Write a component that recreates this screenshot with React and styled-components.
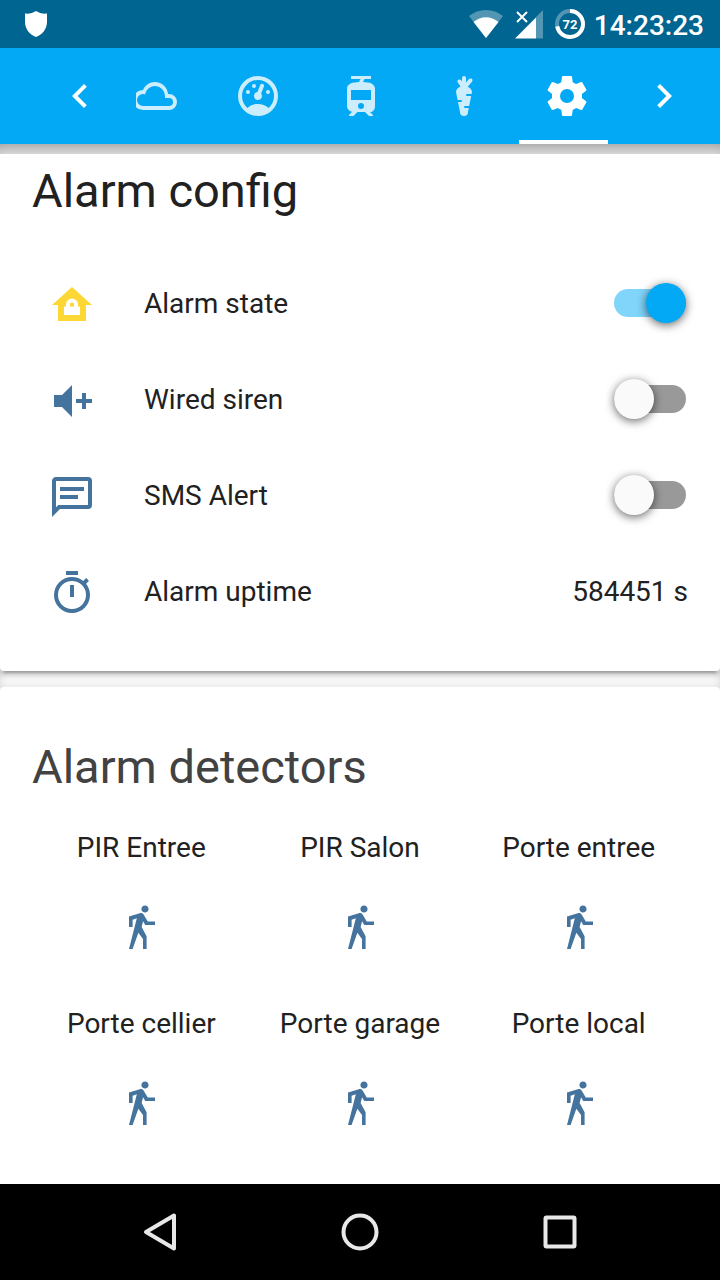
import React from "react";
import styled, { createGlobalStyle } from "styled-components";

const GlobalStyle = createGlobalStyle`
  *, *::before, *::after { box-sizing: border-box; }
  body {
    margin: 0;
    background: #f7f7f7;
    color: #212121;
    font-family: Roboto, "Noto Sans", sans-serif;
    font-size: 28px;
    line-height: 40px;
  }
  button { border: 0; padding: 0; background: none; color: inherit; font: inherit; }
`;

const icons = {
  chevronLeft: "M15.41,16.58L10.83,12L15.41,7.41L14,6L8,12L14,18L15.41,16.58Z",
  chevronRight: "M8.59,16.58L13.17,12L8.59,7.41L10,6L16,12L10,18L8.59,16.58Z",
  cloud:
    "M6,19A5,5 0 0,1 1,14A5,5 0 0,1 6,9C7,6.65 9.3,5 12,5C15.43,5 18.24,7.66 18.5,11.03L19,11A4,4 0 0,1 23,15A4,4 0 0,1 19,19H6M19,13H17V12A5,5 0 0,0 12,7C9.5,7 7.45,8.82 7.06,11.19C6.73,11.07 6.37,11 6,11A3,3 0 0,0 3,14A3,3 0 0,0 6,17H19A2,2 0 0,0 21,15A2,2 0 0,0 19,13Z",
  gauge:
    "M12,2A10,10 0 0,0 2,12A10,10 0 0,0 12,22A10,10 0 0,0 22,12A10,10 0 0,0 12,2M12,4A8,8 0 0,1 20,12C20,14.4 19,16.5 17.3,18C15.9,16.7 14,16 12,16C10,16 8.2,16.7 6.7,18C5,16.5 4,14.4 4,12A8,8 0 0,1 12,4M14,5.89C13.62,5.9 13.26,6.15 13.1,6.54L11.81,9.77L11.71,10C11,10.13 10.41,10.6 10.14,11.26C9.73,12.29 10.23,13.45 11.26,13.86C12.29,14.27 13.45,13.77 13.86,12.74C14.12,12.08 14,11.32 13.57,10.76L13.67,10.5L14.96,7.29L14.97,7.26C15.17,6.75 14.92,6.17 14.41,5.96C14.28,5.91 14.15,5.89 14,5.89M10,6A1,1 0 0,0 9,7A1,1 0 0,0 10,8A1,1 0 0,0 11,7A1,1 0 0,0 10,6M7,9A1,1 0 0,0 6,10A1,1 0 0,0 7,11A1,1 0 0,0 8,10A1,1 0 0,0 7,9M17,9A1,1 0 0,0 16,10A1,1 0 0,0 17,11A1,1 0 0,0 18,10A1,1 0 0,0 17,9Z",
  tram:
    "M19,16.94V8.5C19,5.79 16.39,5.1 13,5L13.75,3.5H17V2H7V3.5H11.75L11,5C7.86,5.11 5,5.73 5,8.5V16.94C5,18.39 6.19,19.6 7.59,19.91L6,21.5V22H8.23L10.23,20H14L16,22H18V21.5L16.5,20H16.42C18.11,20 19,18.63 19,16.94M12,18.5A1.5,1.5 0 0,1 10.5,17A1.5,1.5 0 0,1 12,15.5A1.5,1.5 0 0,1 13.5,17A1.5,1.5 0 0,1 12,18.5M17,14H7V9H17V14Z",
  carrot:
    "M16,10L15.8,11H13.5A0.5,0.5 0 0,0 13,11.5A0.5,0.5 0 0,0 13.5,12H15.6L14.6,17H12.5A0.5,0.5 0 0,0 12,17.5A0.5,0.5 0 0,0 12.5,18H14.4L14,20A2,2 0 0,1 12,22A2,2 0 0,1 10,20L9,15H10.5A0.5,0.5 0 0,0 11,14.5A0.5,0.5 0 0,0 10.5,14H8.8L8,10C8,8.8 8.93,7.77 10.29,7.29L8.9,5.28C8.59,4.82 8.7,4.2 9.16,3.89C9.61,3.57 10.23,3.69 10.55,4.14L11,4.8V3A1,1 0 0,1 12,2A1,1 0 0,1 13,3V5.28L14.5,3.54C14.83,3.12 15.47,3.07 15.89,3.43C16.31,3.78 16.36,4.41 16,4.84L13.87,7.35C15.14,7.85 16,8.85 16,10Z",
  settings:
    "M12,15.5A3.5,3.5 0 0,1 8.5,12A3.5,3.5 0 0,1 12,8.5A3.5,3.5 0 0,1 15.5,12A3.5,3.5 0 0,1 12,15.5M19.43,12.97C19.47,12.65 19.5,12.33 19.5,12C19.5,11.67 19.47,11.34 19.43,11L21.54,9.37C21.73,9.22 21.78,8.95 21.66,8.73L19.66,5.27C19.54,5.05 19.27,4.96 19.05,5.05L16.56,6.05C16.04,5.66 15.5,5.32 14.87,5.07L14.5,2.42C14.46,2.18 14.25,2 14,2H10C9.75,2 9.54,2.18 9.5,2.42L9.13,5.07C8.5,5.32 7.96,5.66 7.44,6.05L4.95,5.05C4.73,4.96 4.46,5.05 4.34,5.27L2.34,8.73C2.21,8.95 2.27,9.22 2.46,9.37L4.57,11C4.53,11.34 4.5,11.67 4.5,12C4.5,12.33 4.53,12.65 4.57,12.97L2.46,14.63C2.27,14.78 2.21,15.05 2.34,15.27L4.34,18.73C4.46,18.95 4.73,19.03 4.95,18.95L7.44,17.94C7.96,18.34 8.5,18.68 9.13,18.93L9.5,21.58C9.54,21.82 9.75,22 10,22H14C14.25,22 14.46,21.82 14.5,21.58L14.87,18.93C15.5,18.67 16.04,18.34 16.56,17.94L19.05,18.95C19.27,19.03 19.54,18.95 19.66,18.73L21.66,15.27C21.78,15.05 21.73,14.78 21.54,14.63L19.43,12.97Z",
  homeLock:
    "M12,3L2,12H5V20H19V12H22L12,3M12,8.8A3,3 0 0,1 15,11.8V12.8H16V17H8V12.8H9V11.8A3,3 0 0,1 12,8.8M12,10.8A1.1,1.1 0 0,0 10.9,11.9V12.8H13.1V11.9A1.1,1.1 0 0,0 12,10.8Z",
  volumePlus: "M3,9H7L12,4V20L7,15H3V9M14,11H17V8H19V11H22V13H19V16H17V13H14V11Z",
  message:
    "M20,2A2,2 0 0,1 22,4V16A2,2 0 0,1 20,18H6L2,22V4C2,2.89 2.9,2 4,2H20M4,4V17.17L5.17,16H20V4H4M6,7H18V9H6V7M6,11H15V13H6V11Z",
  timer:
    "M12,20A7,7 0 0,1 5,13A7,7 0 0,1 12,6A7,7 0 0,1 19,13A7,7 0 0,1 12,20M19.03,7.39L20.45,5.97C20,5.46 19.55,5 19.04,4.56L17.62,6C16.07,4.74 14.12,4 12,4A9,9 0 0,0 3,13A9,9 0 0,0 12,22C17,22 21,17.97 21,13C21,10.88 20.26,8.93 19.03,7.39M11,14H13V8H11V14M15,1H9V3H15V1Z",
  walk:
    "M14.12,10H19V8.2H15.38L13.38,4.87C13.08,4.37 12.54,4.03 11.92,4.03C11.74,4.03 11.58,4.06 11.42,4.11L6,5.8V11H7.8V7.33L9.91,6.67L6,22H7.8L10.67,13.89L13,17V22H14.8V15.59L12.31,11.05L13.04,8.18M14,3.8C15,3.8 15.8,3 15.8,2C15.8,1 15,0.2 14,0.2C13,0.2 12.2,1 12.2,2C12.2,3 13,3.8 14,3.8Z",
};

const Glyph = styled.svg`
  display: block;
  flex: none;
  width: 48px;
  height: 48px;
  overflow: visible;
  fill: ${(p) => p.$color || "currentColor"};
`;

function Icon({ name, color }) {
  return (
    <Glyph viewBox="0 0 24 24" $color={color} aria-hidden="true">
      <path fillRule="evenodd" d={icons[name]} />
    </Glyph>
  );
}

const Screen = styled.div`
  min-height: 100vh;
  display: flex;
  flex-direction: column;
`;

const StatusBar = styled.div`
  display: flex;
  align-items: center;
  justify-content: space-between;
  height: 48px;
  padding: 0 16px 0 20px;
  background: #006590;
  color: #fff;
`;

const StatusGroup = styled.div`
  display: flex;
  align-items: center;
  gap: ${(p) => p.$gap}px;
`;

const StatusIcon = styled.svg`
  display: block;
  width: ${(p) => p.$width}px;
  height: 32px;
`;

const BatteryText = styled.text`
  font: 700 13px Roboto, sans-serif;
  fill: #fff;
`;

const Clock = styled.time`
  padding-top: 4px;
  font-size: 28px;
  font-weight: 500;
`;

const Toolbar = styled.header`
  display: flex;
  height: 96px;
  padding-left: 24px;
  background: #03a9f4;
  color: #fff;
`;

const ScrollButton = styled.button`
  flex: none;
  display: grid;
  place-items: center;
  width: 112px;
`;

const TabScroller = styled.nav`
  flex: 1;
  min-width: 0;
  overflow: hidden;
`;

const TabList = styled.div`
  display: flex;
  justify-content: flex-end;
  gap: 7px;
  height: 100%;
  margin-right: -7px;
`;

const Tab = styled.button`
  flex: none;
  display: grid;
  place-items: center;
  width: 96px;
  box-shadow: ${(p) => (p.$active ? "inset 0 -4px #fff" : "none")};
  > svg { opacity: ${(p) => (p.$active ? 1 : 0.8)}; }
`;

const Content = styled.main`
  flex: 1;
  display: flex;
  flex-direction: column;
  gap: 16px;
  padding-top: 10px;
  box-shadow: inset 0 12px 14px -6px rgba(0, 0, 0, 0.36);
`;

const Card = styled.section`
  padding: ${(p) => (p.$first ? "5px 32px 39px" : "48px 32px 32px")};
  background: #fff;
  border-radius: ${(p) => (p.$first ? "0 0 4px 4px" : "4px 4px 0 0")};
  box-shadow: 0 4px 4px rgba(0, 0, 0, 0.14), 0 2px 10px rgba(0, 0, 0, 0.12),
    0 6px 2px -4px rgba(0, 0, 0, 0.2);
  ${(p) => !p.$first && "flex: 1;"}
`;

const CardTitle = styled.h2`
  margin: 0;
  font-size: 47px;
  line-height: 64px;
  font-weight: 400;
  color: ${(p) => (p.$muted ? "#424242" : "#212121")};
`;

const EntityList = styled.div`
  display: flex;
  flex-direction: column;
  gap: 16px;
  padding-top: 41px;
`;

const EntityRow = styled.div`
  display: flex;
  align-items: center;
  height: 80px;
  padding-left: 16px;
  > svg { margin-top: 2px; }
`;

const EntityName = styled.label`
  flex: 1;
  padding-left: 48px;
`;

const Toggle = styled.input`
  appearance: none;
  display: flex;
  align-items: center;
  width: 72px;
  height: 28px;
  margin: 0 2px 2px 0;
  border-radius: 14px;
  background: #999;
  &::before {
    content: "";
    flex: none;
    width: 40px;
    height: 40px;
    border-radius: 50%;
    background: #fafafa;
    box-shadow: 0 2px 10px rgba(0, 0, 0, 0.6);
  }
  &:checked {
    justify-content: flex-end;
    background: #81d4fa;
  }
  &:checked::before { background: #03a9f4; }
`;

const DetectorGrid = styled.div`
  display: grid;
  grid-template-columns: repeat(3, 1fr);
  row-gap: 48px;
  padding-top: 29px;
`;

const Detector = styled.div`
  display: flex;
  flex-direction: column;
  align-items: center;
  gap: 37px;
  height: 128px;
  white-space: nowrap;
`;

const NavBar = styled.nav`
  display: flex;
  justify-content: center;
  gap: 104px;
  height: 96px;
  background: #000;
`;

const NavButton = styled.button`
  display: grid;
  place-items: center;
  width: 96px;
  svg {
    width: 48px;
    height: 48px;
    fill: none;
    stroke: #e8e8e8;
    stroke-width: 4;
    stroke-linejoin: round;
  }
`;

const tabs = [
  { icon: "cloud", label: "Weather" },
  { icon: "gauge", label: "Gauges" },
  { icon: "tram", label: "Transport" },
  { icon: "carrot", label: "Garden" },
  { icon: "settings", label: "Settings", active: true },
];

const entities = [
  { id: "state", icon: "homeLock", name: "Alarm state", on: true, color: "#fdd835" },
  { id: "siren", icon: "volumePlus", name: "Wired siren", on: false },
  { id: "sms", icon: "message", name: "SMS Alert", on: false },
  { id: "uptime", icon: "timer", name: "Alarm uptime", value: "584451 s" },
];

const detectors = [
  "PIR Entree",
  "PIR Salon",
  "Porte entree",
  "Porte cellier",
  "Porte garage",
  "Porte local",
];

export default function App() {
  return (
    <Screen>
      <GlobalStyle />
      <StatusBar>
        <StatusIcon $width={32} viewBox="0 0 32 32" aria-hidden="true">
          <path fill="#fff" d="M16 3C13 5 9 6 5 5.500V14C5 21 10 27 16 29C22 27 27 21 27 14V5.500C23 6 19 5 16 3Z" />
        </StatusIcon>
        <StatusGroup $gap={8}>
          <StatusGroup $gap={10}>
            <StatusIcon $width={36} viewBox="0 0 36 32" aria-hidden="true">
              <path fill="#fff" opacity=".32" d="M18 30L1 8C11 0 25 0 35 8Z" />
              <path fill="#fff" d="M18 30L5.500 14C13 7.500 23 7.500 30.500 14Z" />
            </StatusIcon>
            <StatusIcon $width={30} viewBox="0 0 30 32" aria-hidden="true">
              <path fill="#fff" opacity=".32" d="M29 2V30.500H22V9Z" />
              <path fill="#fff" d="M1 30.500L22 9.500V30.500Z" />
              <path stroke="#006590" strokeWidth="4" d="M3 4L13 14M13 4L3 14" />
              <path stroke="#fff" strokeWidth="2" d="M3 4L13 14M13 4L3 14" />
            </StatusIcon>
            <StatusIcon $width={32} viewBox="0 0 32 32" aria-hidden="true">
              <circle cx="16" cy="16" r="13" fill="none" stroke="#fff" strokeOpacity=".32" strokeWidth="4" />
              <circle
                cx="16" cy="16" r="13" fill="none" stroke="#fff" strokeWidth="4"
                pathLength="100" strokeDasharray="72 28" transform="rotate(-90 16 16)"
              />
              <BatteryText x="16" y="21" textAnchor="middle">72</BatteryText>
            </StatusIcon>
          </StatusGroup>
          <Clock>14:23:23</Clock>
        </StatusGroup>
      </StatusBar>

      <Toolbar>
        <ScrollButton aria-label="Previous tabs"><Icon name="chevronLeft" /></ScrollButton>
        <TabScroller>
          <TabList>
            {tabs.map((tab) => (
              <Tab key={tab.icon} $active={tab.active} aria-label={tab.label}>
                <Icon name={tab.icon} />
              </Tab>
            ))}
          </TabList>
        </TabScroller>
        <ScrollButton aria-label="Next tabs"><Icon name="chevronRight" /></ScrollButton>
      </Toolbar>

      <Content>
        <Card $first>
          <CardTitle>Alarm config</CardTitle>
          <EntityList>
            {entities.map((entity) => (
              <EntityRow key={entity.id}>
                <Icon name={entity.icon} color={entity.color || "#44739e"} />
                <EntityName
                  as={entity.value ? "span" : "label"}
                  htmlFor={entity.value ? undefined : entity.id}
                >
                  {entity.name}
                </EntityName>
                {entity.value ? (
                  <span>{entity.value}</span>
                ) : (
                  <Toggle type="checkbox" id={entity.id} defaultChecked={entity.on} />
                )}
              </EntityRow>
            ))}
          </EntityList>
        </Card>
        <Card>
          <CardTitle $muted>Alarm detectors</CardTitle>
          <DetectorGrid>
            {detectors.map((name) => (
              <Detector key={name}>
                <span>{name}</span>
                <Icon name="walk" color="#44739e" />
              </Detector>
            ))}
          </DetectorGrid>
        </Card>
      </Content>

      <NavBar>
        <NavButton aria-label="Back">
          <svg viewBox="0 0 48 48"><path d="M38 7.500V40.500L10 24Z" /></svg>
        </NavButton>
        <NavButton aria-label="Home">
          <svg viewBox="0 0 48 48"><circle cx="24" cy="24" r="16.500" /></svg>
        </NavButton>
        <NavButton aria-label="Recent apps">
          <svg viewBox="0 0 48 48"><rect x="9.500" y="9.500" width="29" height="29" rx="1" /></svg>
        </NavButton>
      </NavBar>
    </Screen>
  );
}
